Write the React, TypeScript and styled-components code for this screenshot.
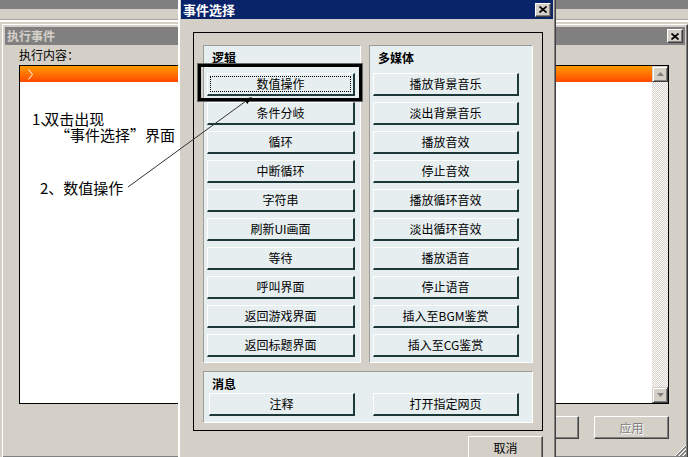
import styled, { createGlobalStyle } from "styled-components";

const GlobalStyle = createGlobalStyle`
  html, body {
    margin: 0;
    padding: 0;
    background: #d4d0c8;
  }
  body {
    font-family: "Noto Sans CJK SC", "Liberation Sans", sans-serif;
    font-size: 12px;
    color: #000;
  }
  * {
    box-sizing: border-box;
  }
`;

const Desktop = styled.div`
  position: relative;
  width: 688px;
  height: 457px;
  overflow: hidden;
  background: #d4d0c8;
`;

// the main window far behind
const BackWindow = styled.div`
  position: absolute;
  left: 0;
  top: 0;
  right: 0;
  bottom: 0;
  display: flex;
  flex-direction: column;
`;

const BackTitle = styled.div`
  height: 9px;
  background: #808080;
`;

const BackBar = styled.div`
  height: 11px;
  border-bottom: 1px solid #a8a49c;
  box-shadow: 0 2px 0 #fff;
`;

const Window = styled.div`
  position: absolute;
  display: flex;
  flex-direction: column;
  padding: 2px;
  background: #d4d0c8;
  border: 1px solid;
  border-color: #fff #404040 #404040 #fff;
  box-shadow: inset -1px -1px 0 #808080;
`;

const ExecWindow = styled(Window)`
  left: 2px;
  top: 24px;
  width: 686px;
  height: 434px;
`;

const Dialog = styled(Window)`
  left: 178px;
  top: -3px;
  width: 378px;
  height: 475px;
  border-color: #d4d0c8 #404040 #404040 #fff;
  box-shadow: inset -1px -1px 0 #808080, inset 1px 1px 0 #fff;
`;

const TitleBar = styled.div<{ $active?: boolean; $h: number }>`
  flex: none;
  height: ${({ $h }) => $h}px;
  display: flex;
  align-items: center;
  justify-content: space-between;
  padding: 0 2px;
  background: ${({ $active }) => ($active ? "#0a246a" : "#808080")};
  color: ${({ $active }) => ($active ? "#fff" : "#d4d0c8")};
  font-weight: bold;
  font-size: ${({ $active }) => ($active ? 13 : 12)}px;
  line-height: 1;
`;

const CloseButton = styled.div`
  width: 16px;
  height: 14px;
  display: flex;
  align-items: center;
  justify-content: center;
  background: #d4d0c8;
  border: 1px solid;
  border-color: #fff #404040 #404040 #fff;
  box-shadow: inset -1px -1px 0 #808080;
`;

const ExecBody = styled.div`
  flex: 1;
  display: flex;
  flex-direction: column;
  padding: 2px 16px 0 14px;
`;

const FieldLabel = styled.div`
  line-height: 16px;
  margin-bottom: 2px;
`;

const ListBox = styled.div`
  height: 339px;
  display: flex;
  border: 1px solid #000;
  background: #fff;
`;

const ListContent = styled.div`
  flex: 1;
  display: flex;
  flex-direction: column;
`;

const ListHeader = styled.div`
  height: 16px;
  display: flex;
  align-items: center;
  padding-left: 8px;
  background: linear-gradient(#ff9c00, #ff4800);
`;

const ScrollBar = styled.div`
  width: 16px;
  display: flex;
  flex-direction: column;
`;

const ScrollTrack = styled.div`
  flex: 1;
  background: repeating-conic-gradient(#d4d0c8 0 25%, #fff 0 50%) 0 0 / 2px 2px;
`;

const ScrollArrow = styled.div`
  width: 16px;
  height: 16px;
  display: flex;
  align-items: center;
  justify-content: center;
  background: #d4d0c8;
  border: 1px solid;
  border-color: #d4d0c8 #404040 #404040 #d4d0c8;
  box-shadow: inset 1px 1px 0 #fff, inset -1px -1px 0 #808080;
`;

const ButtonRow = styled.div`
  display: flex;
  justify-content: flex-end;
  gap: 15px;
  margin-top: 12px;
`;

const ClassicButton = styled.div<{ $disabled?: boolean }>`
  width: 75px;
  height: 23px;
  display: flex;
  align-items: center;
  justify-content: center;
  background: #d4d0c8;
  border: 1px solid;
  border-color: #fff #404040 #404040 #fff;
  box-shadow: inset -1px -1px 0 #808080;
  color: ${({ $disabled }) => ($disabled ? "#808080" : "#000")};
  text-shadow: ${({ $disabled }) => ($disabled ? "1px 1px 0 #fff" : "none")};
  line-height: 1;
`;

const Grip = styled.svg`
  position: absolute;
  right: 0;
  bottom: 0;
`;

const DialogBody = styled.div`
  flex: 1;
  display: flex;
  flex-direction: column;
  padding: 13px 10px 0 12px;
`;

const Frame = styled.div`
  height: 399px;
  border: 1px solid #000;
  padding: 12px 9px 7px 9px;
  display: grid;
  grid-template-columns: 158px 1fr;
  grid-template-rows: 318px 52px;
  gap: 8px;
`;

const Panel = styled.div<{ $span?: boolean }>`
  grid-column: ${({ $span }) => ($span ? "1 / -1" : "auto")};
  display: flex;
  flex-direction: column;
  padding: 4px 0 5px 3px;
  background: #e6eef0;
  border: 1px solid;
  border-color: #9c9c9c #fff #fff #9c9c9c;
`;

const Legend = styled.div<{ $gap: number }>`
  font-weight: bold;
  line-height: 16px;
  padding-left: 5px;
  margin-bottom: ${({ $gap }) => $gap}px;
`;

const ButtonStack = styled.div`
  display: flex;
  flex-direction: column;
  gap: 6px;
`;

const MessageRow = styled.div`
  display: flex;
  gap: 18px;
  padding-left: 2px;
`;

const ActionButton = styled.div<{ $w: number; $focused?: boolean }>`
  position: relative;
  width: ${({ $w }) => $w}px;
  height: 23px;
  display: flex;
  align-items: center;
  justify-content: center;
  background: #e6eef0;
  border-style: solid;
  border-width: 1px 2px 2px 1px;
  border-color: #fff #1d3838 #1d3838 #fff;
  line-height: 1;

  &::after {
    content: "";
    display: ${({ $focused }) => ($focused ? "block" : "none")};
    position: absolute;
    inset: 2px;
    border: 1px dotted #000;
  }
`;

const DialogFooter = styled.div`
  display: flex;
  justify-content: flex-end;
  margin-top: 5px;
`;

// annotations drawn on top of the screenshot
const Overlay = styled.div`
  position: absolute;
  inset: 0;
  pointer-events: none;
`;

const Highlight = styled.div`
  position: absolute;
  left: 198px;
  top: 64px;
  width: 164px;
  height: 37px;
  border: 3px solid #000;
  box-shadow: 0 0 0 1px #6a6a6a;
`;

const Note = styled.div<{ $x: number; $y: number }>`
  position: absolute;
  left: ${({ $x }) => $x}px;
  top: ${({ $y }) => $y}px;
  font-size: 15px;
  line-height: 16px;
  white-space: nowrap;
`;

const NoteLine = styled.div<{ $indent?: number }>`
  padding-left: ${({ $indent }) => $indent ?? 0}px;
`;

// the small enumeration comma after "1" is narrow in the shot
const Mark = styled.span`
  letter-spacing: -11px;
`;

const logicItems = [
  "数值操作",
  "条件分岐",
  "循环",
  "中断循环",
  "字符串",
  "刷新UI画面",
  "等待",
  "呼叫界面",
  "返回游戏界面",
  "返回标题界面",
];

const mediaItems = [
  "播放背景音乐",
  "淡出背景音乐",
  "播放音效",
  "停止音效",
  "播放循环音效",
  "淡出循环音效",
  "播放语音",
  "停止语音",
  "插入至BGM鉴赏",
  "插入至CG鉴赏",
];

const CloseIcon = () => (
  <svg width="8" height="7" viewBox="0 0 8 7">
    <path d="M0.5 0.5L7.5 6.5M7.5 0.5L0.5 6.5" stroke="#000" strokeWidth="1.7" />
  </svg>
);

const Arrow = ({ up }: { up?: boolean }) => (
  <svg width="7" height="4" viewBox="0 0 7 4">
    <polygon
      points={up ? "3.5,0 7,4 0,4" : "0,0 7,0 3.5,4"}
      fill="#808080"
    />
  </svg>
);

export default function App() {
  return (
    <>
      <GlobalStyle />
      <Desktop>
        <BackWindow>
          <BackTitle />
          <BackBar />
        </BackWindow>

        <ExecWindow>
          <TitleBar $h={18}>
            <span>执行事件</span>
            <CloseButton>
              <CloseIcon />
            </CloseButton>
          </TitleBar>
          <ExecBody>
            <FieldLabel>执行内容：</FieldLabel>
            <ListBox>
              <ListContent>
                <ListHeader>
                  <svg width="5" height="11" viewBox="0 0 5 11">
                    <polyline points="0.5,0.5 4.5,5.5 0.5,10.5" fill="none" stroke="#fff" />
                  </svg>
                </ListHeader>
              </ListContent>
              <ScrollBar>
                <ScrollArrow>
                  <Arrow up />
                </ScrollArrow>
                <ScrollTrack />
                <ScrollArrow>
                  <Arrow />
                </ScrollArrow>
              </ScrollBar>
            </ListBox>
            <ButtonRow>
              <ClassicButton>确定</ClassicButton>
              <ClassicButton $disabled>应用</ClassicButton>
            </ButtonRow>
          </ExecBody>
          <Grip width="13" height="13" viewBox="0 0 13 13">
            <path d="M12 1L1 12M12 5L5 12M12 9L9 12" stroke="#fff" />
            <path d="M12 2L2 12M12 3L3 12M12 6L6 12M12 7L7 12M12 10L10 12M12 11L11 12" stroke="#808080" />
          </Grip>
        </ExecWindow>

        <Dialog>
          <TitleBar $active $h={19}>
            <span>事件选择</span>
            <CloseButton>
              <CloseIcon />
            </CloseButton>
          </TitleBar>
          <DialogBody>
            <Frame>
              <Panel>
                <Legend $gap={7}>逻辑</Legend>
                <ButtonStack>
                  {logicItems.map((t, i) => (
                    <ActionButton key={t} $w={148} $focused={i === 0}>
                      {t}
                    </ActionButton>
                  ))}
                </ButtonStack>
              </Panel>
              <Panel>
                <Legend $gap={7}>多媒体</Legend>
                <ButtonStack>
                  {mediaItems.map((t) => (
                    <ActionButton key={t} $w={146}>
                      {t}
                    </ActionButton>
                  ))}
                </ButtonStack>
              </Panel>
              <Panel $span>
                <Legend $gap={1}>消息</Legend>
                <MessageRow>
                  <ActionButton $w={146}>注释</ActionButton>
                  <ActionButton $w={146}>打开指定网页</ActionButton>
                </MessageRow>
              </Panel>
            </Frame>
            <DialogFooter>
              <ClassicButton>取消</ClassicButton>
            </DialogFooter>
          </DialogBody>
        </Dialog>

        <Overlay>
          <Highlight />
          <svg width="688" height="457" viewBox="0 0 688 457" style={{ position: "absolute", left: 0, top: 0 }}>
            <line x1="128" y1="187" x2="246" y2="101" stroke="#333" strokeWidth="1" />
            <polygon points="252,97 247.3,104.1 243.7,99.3" fill="#000" />
          </svg>
          <Note $x={32} $y={111}>
            <NoteLine>
              1<Mark>、</Mark>双击出现
            </NoteLine>
            <NoteLine $indent={23}>“事件选择”界面</NoteLine>
          </Note>
          <Note $x={40} $y={180}>
            <NoteLine>2、数值操作</NoteLine>
          </Note>
        </Overlay>
      </Desktop>
    </>
  );
}
